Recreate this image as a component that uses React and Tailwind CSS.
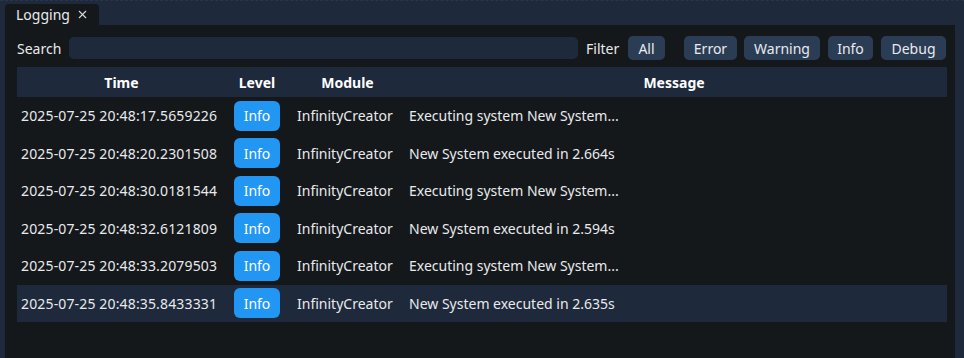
import { X } from 'lucide-react';

const ROWS = [
  { time: '2025-07-25 20:48:17.5659226', msg: 'Executing system New System...' },
  { time: '2025-07-25 20:48:20.2301508', msg: 'New System executed in 2.664s' },
  { time: '2025-07-25 20:48:30.0181544', msg: 'Executing system New System...' },
  { time: '2025-07-25 20:48:32.6121809', msg: 'New System executed in 2.594s' },
  { time: '2025-07-25 20:48:33.2079503', msg: 'Executing system New System...' },
  { time: '2025-07-25 20:48:35.8433331', msg: 'New System executed in 2.635s', selected: true },
];

export default function App() {
  return (
    <div className="w-[964px] h-[358px] bg-[#1e293b] flex flex-col pt-[3px] px-[5px] text-[14px] text-[#e8eaed] font-['Noto_Sans',sans-serif] border-t border-dashed border-[#2a3548] overflow-hidden">
      {/* Tab */}
      <div className="flex">
        <div className="h-[21px] w-[94px] bg-[#15181b] rounded-t-[4px] flex items-center pl-[11px] gap-[6px] leading-none">
          <span>Logging</span>
          <X size={13} strokeWidth={2} className="text-[#d8d8d8]" />
        </div>
      </div>

      {/* Panel */}
      <div className="flex-1 w-[950px] bg-[#15181b] pt-[11px] px-[12px]">
        {/* Search / filter row */}
        <div className="flex items-center h-[24px] w-[932px]">
          <span className="w-[52px] shrink-0">Search</span>
          <div className="w-[509px] shrink-0 h-[22px] rounded-[5px] bg-[#1e293b]" />
          <span className="ml-[8px] w-[42px] shrink-0">Filter</span>
          <button className="shrink-0 h-[24px] w-[37px] rounded-[5px] bg-[#2b3d55]">All</button>
          <button className="shrink-0 ml-[19px] h-[24px] w-[53px] rounded-[5px] bg-[#2b3d55]">Error</button>
          <button className="shrink-0 ml-[7px] h-[24px] w-[76px] rounded-[5px] bg-[#2b3d55]">Warning</button>
          <button className="shrink-0 ml-[8px] h-[24px] w-[45px] rounded-[5px] bg-[#2b3d55]">Info</button>
          <button className="shrink-0 ml-[8px] h-[24px] w-[65px] rounded-[5px] bg-[#2b3d55]">Debug</button>
        </div>

        {/* Table */}
        <div className="mt-[7px] w-[930px]">
          <div className="grid grid-cols-[209px_62px_113px_1fr] h-[30px] items-center bg-[#1e293b] font-bold text-white">
            <div className="text-center">Time</div>
            <div className="text-center">Level</div>
            <div className="text-center pl-[6px]">Module</div>
            <div className="text-center">Message</div>
          </div>
          {ROWS.map((r, i) => (
            <div
              key={i}
              className={`grid grid-cols-[209px_62px_113px_1fr] h-[37.5px] items-center ${r.selected ? 'bg-[#1e293b]' : ''}`}
            >
              <div className="pl-[4px] whitespace-nowrap tracking-[0.15px]">{r.time}</div>
              <div className="flex justify-center">
                <span className="h-[30px] w-[46px] rounded-[6px] bg-[#2196f3] text-white flex items-center justify-center">
                  Info
                </span>
              </div>
              <div className="pl-[9px]">InfinityCreator</div>
              <div className="pl-[8px] whitespace-nowrap">{r.msg}</div>
            </div>
          ))}
        </div>
      </div>
    </div>
  );
}
